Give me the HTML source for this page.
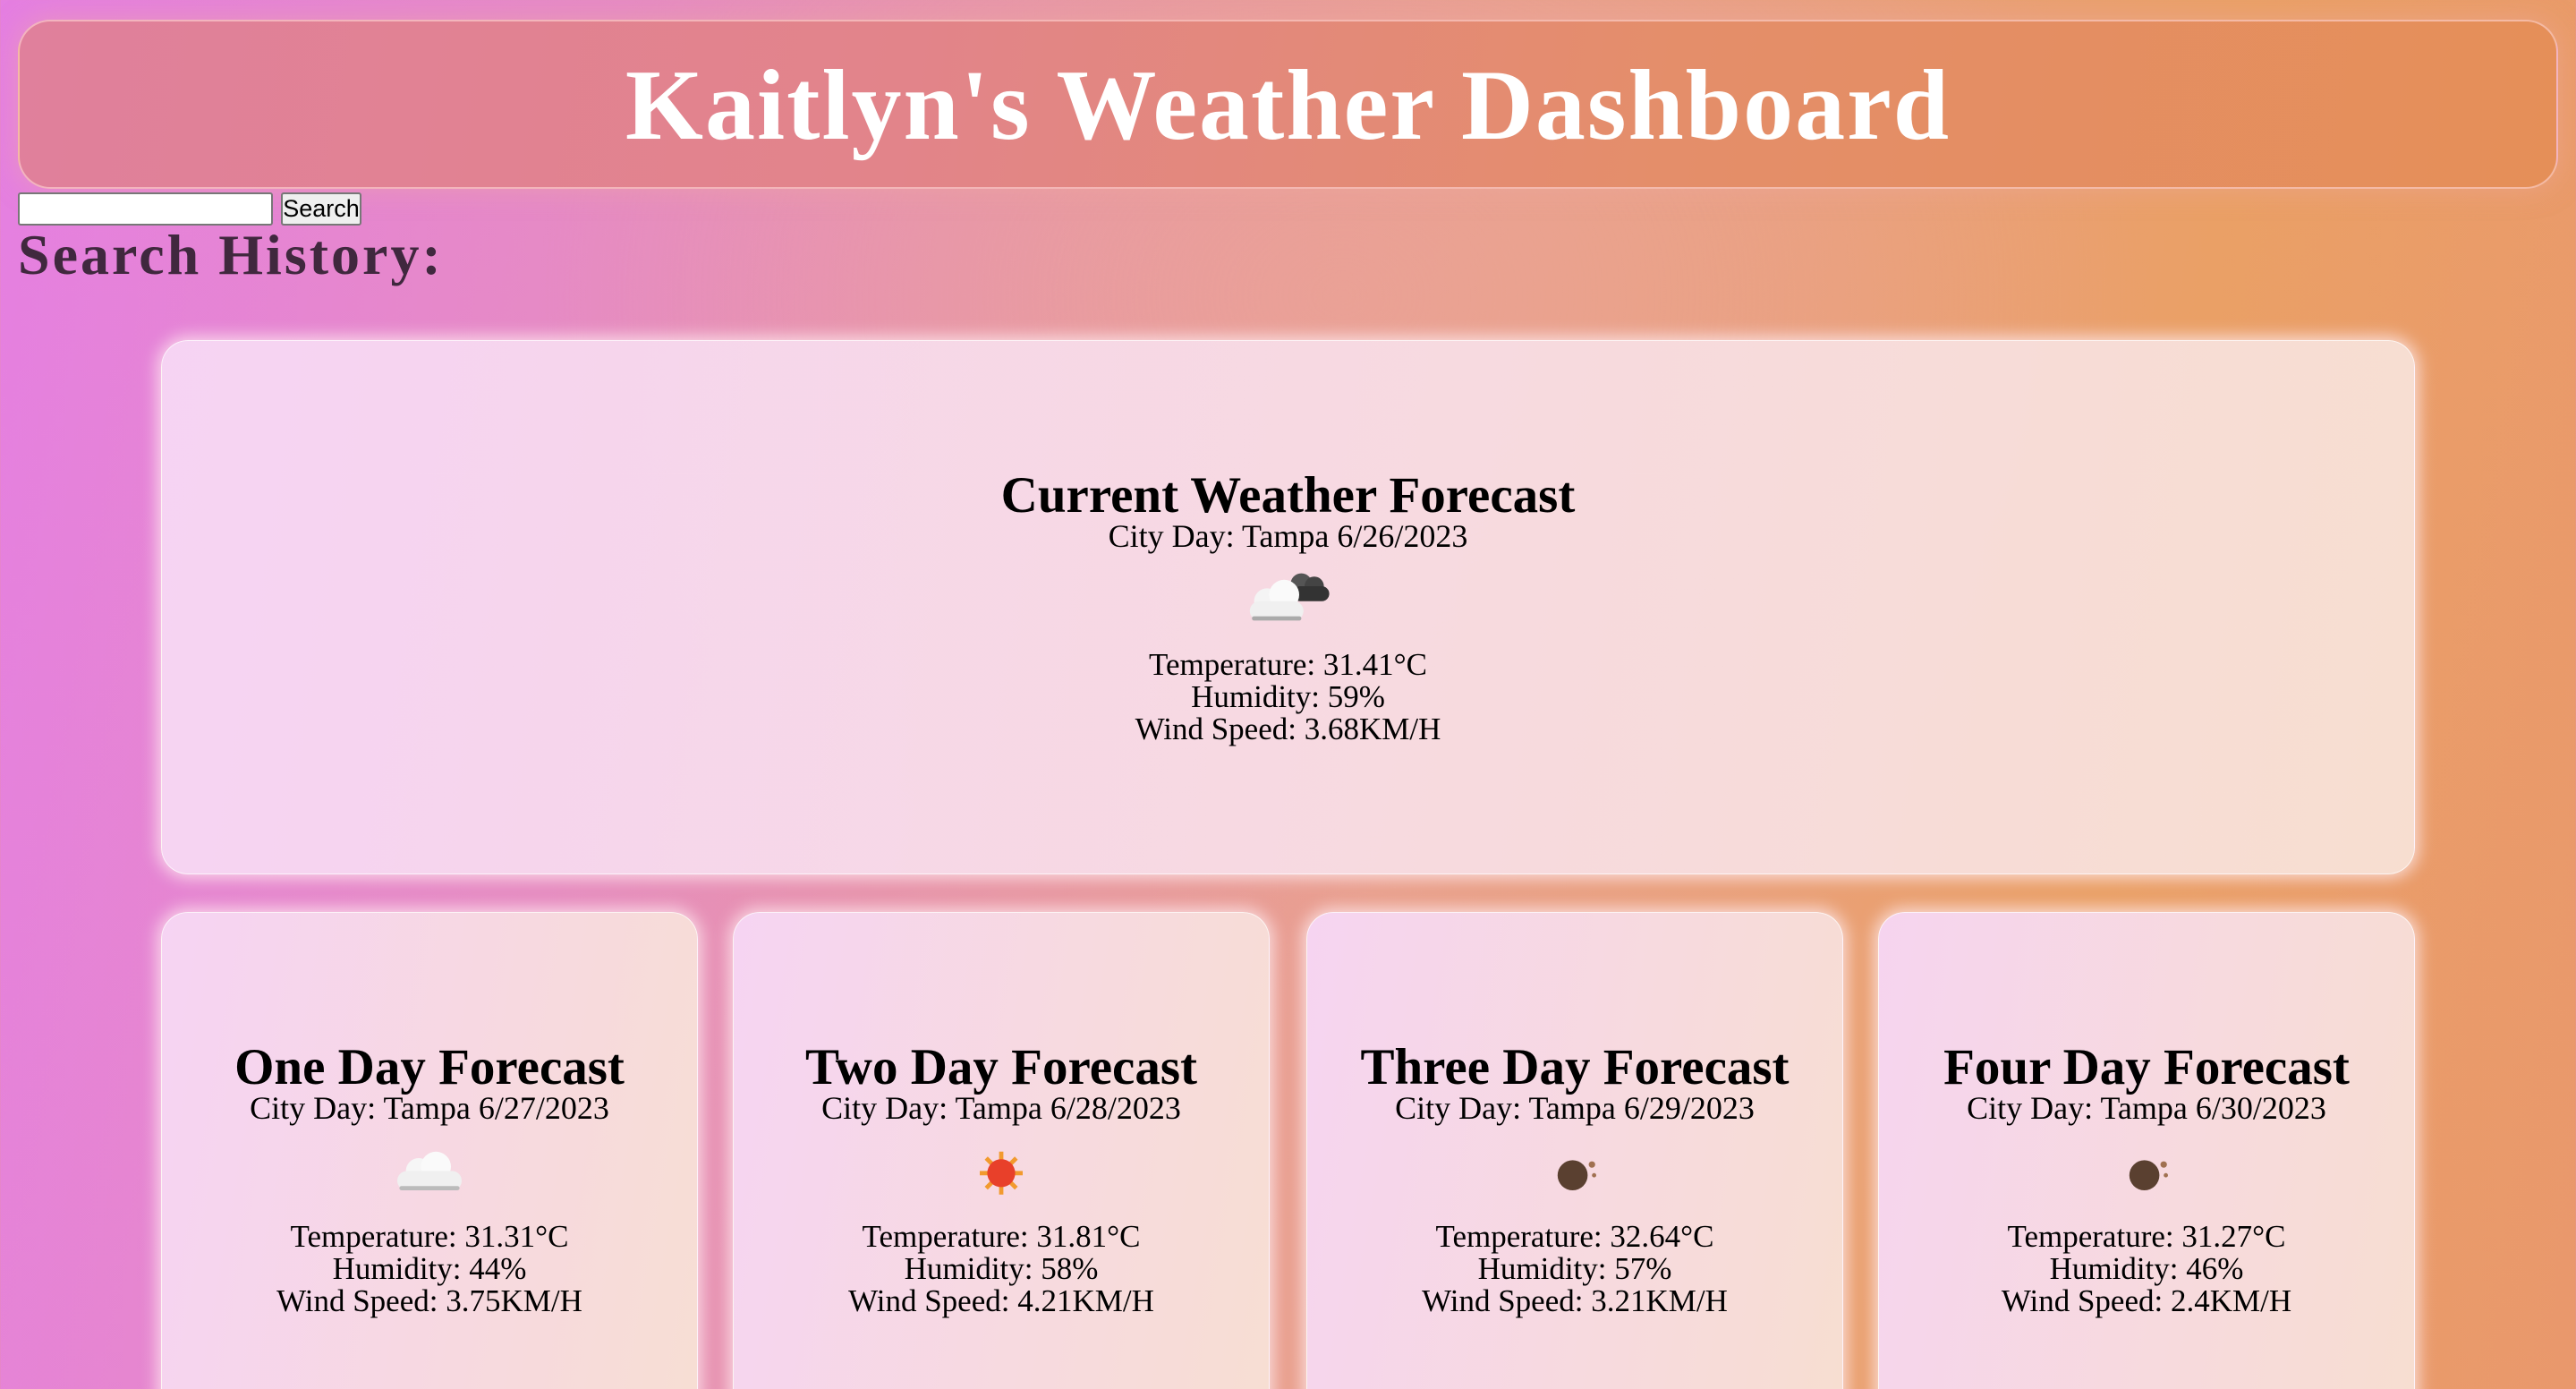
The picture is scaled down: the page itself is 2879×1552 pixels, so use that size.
<!DOCTYPE html>
<html><head><meta charset="utf-8"><style>
*{margin:0;padding:0;box-sizing:border-box}
html,body{width:2879px;height:1552px;overflow:hidden}
body{font-family:"Liberation Serif",serif;background:
radial-gradient(ellipse 900px 700px at 1500px 330px,rgba(235,165,150,.55),rgba(235,165,150,0)),
linear-gradient(100deg,#e57fe2 0%,#e68cc0 25%,#e9a08c 55%,#eaa066 80%,#e9986c 100%);position:relative}
.hdr{position:absolute;left:20px;top:22px;width:2839px;height:189px;border-radius:36px;border:2px solid rgba(255,215,215,.6);background:linear-gradient(100deg,#e0809c 0%,#e2848a 35%,#e48e6a 65%,#e58f58 100%);box-shadow:0 0 30px rgba(240,170,160,.5)}
.hdr h1{position:absolute;left:0;right:0;top:36px;text-align:center;color:#fff;font-size:112px;line-height:116px;font-weight:bold;letter-spacing:2px}
input{position:absolute;left:20px;top:215px;width:285px;height:37px;border:2px solid #777;border-radius:3px;background:#fff}
button{position:absolute;left:314px;top:215px;width:90px;height:37px;border:2px solid #777;border-radius:3px;background:#efefef;font-family:"Liberation Sans",sans-serif;font-size:27px;color:#000}
.sh{position:absolute;left:20px;top:250px;font-size:64px;font-weight:bold;color:#40283e;line-height:70px;letter-spacing:3px}
.card{position:absolute;border-radius:30px;background:linear-gradient(100deg,rgba(246,214,244,.97),rgba(247,224,212,.97));box-shadow:0 0 18px 4px rgba(255,235,240,.8);border:1px solid rgba(255,255,255,.7)}
.card div{position:absolute;left:0;right:0;text-align:center;color:#000}
.t{font-size:57px;font-weight:bold;line-height:60px;top:143px}
.c{font-size:36px;line-height:40px;top:198px}
.ic{top:238px;height:96px}
.ic svg{width:120px;height:96px}
.l1,.l2,.l3{font-size:35px;line-height:36px}
.l1{top:344px}.l2{top:380px}.l3{top:416px}
</style></head><body>
<div class="hdr"><h1>Kaitlyn's Weather Dashboard</h1></div>
<input type="text"><button>Search</button>
<div class="sh">Search History:</div>

<div class="card" style="left:180px;top:380px;width:2519px;height:597px">
<div class="t">Current Weather Forecast</div>
<div class="c">City Day: Tampa 6/26/2023</div>
<div class="ic"><svg viewBox="0 0 100 80"><circle cx="62" cy="28" r="10" fill="#555"/><circle cx="74" cy="30" r="9" fill="#444"/><rect x="54" y="30" width="34" height="14" rx="7" fill="#333"/><circle cx="30" cy="44" r="12" fill="#f4f4f4"/><circle cx="46" cy="38" r="14" fill="#fafafa"/><rect x="14" y="44" width="50" height="18" rx="9" fill="#f0f0f0"/><rect x="16" y="58" width="46" height="4" rx="2" fill="#aaa"/></svg></div>
<div class="l1">Temperature: 31.41°C</div><div class="l2">Humidity: 59%</div><div class="l3">Wind Speed: 3.68KM/H</div>
</div>

<div class="card" style="left:180px;top:1019px;width:600px;height:600px">
<div class="t">One Day Forecast</div>
<div class="c">City Day: Tampa 6/27/2023</div>
<div class="ic"><svg viewBox="0 0 100 80"><circle cx="40" cy="42" r="12" fill="#f6f6f6"/><circle cx="56" cy="38" r="14" fill="#fafafa"/><rect x="20" y="42" width="60" height="18" rx="9" fill="#f0f0f0"/><rect x="22" y="56" width="56" height="4" rx="2" fill="#bbb"/></svg></div>
<div class="l1">Temperature: 31.31°C</div><div class="l2">Humidity: 44%</div><div class="l3">Wind Speed: 3.75KM/H</div>
</div>

<div class="card" style="left:819px;top:1019px;width:600px;height:600px">
<div class="t">Two Day Forecast</div>
<div class="c">City Day: Tampa 6/28/2023</div>
<div class="ic"><svg viewBox="0 0 100 80"><g stroke="#f29a2e" stroke-width="4"><line x1="50" y1="24" x2="50" y2="64"/><line x1="30" y1="44" x2="70" y2="44"/><line x1="36" y1="30" x2="64" y2="58"/><line x1="64" y1="30" x2="36" y2="58"/></g><circle cx="50" cy="44" r="13" fill="#e8402a"/></svg></div>
<div class="l1">Temperature: 31.81°C</div><div class="l2">Humidity: 58%</div><div class="l3">Wind Speed: 4.21KM/H</div>
</div>

<div class="card" style="left:1460px;top:1019px;width:600px;height:600px">
<div class="t">Three Day Forecast</div>
<div class="c">City Day: Tampa 6/29/2023</div>
<div class="ic"><svg viewBox="0 0 100 80"><circle cx="48" cy="46" r="14" fill="#5a4030"/><circle cx="66" cy="36" r="3" fill="#a07050"/><circle cx="68" cy="46" r="2" fill="#a07050"/></svg></div>
<div class="l1">Temperature: 32.64°C</div><div class="l2">Humidity: 57%</div><div class="l3">Wind Speed: 3.21KM/H</div>
</div>

<div class="card" style="left:2099px;top:1019px;width:600px;height:600px">
<div class="t">Four Day Forecast</div>
<div class="c">City Day: Tampa 6/30/2023</div>
<div class="ic"><svg viewBox="0 0 100 80"><circle cx="48" cy="46" r="14" fill="#5a4030"/><circle cx="66" cy="36" r="3" fill="#a07050"/><circle cx="68" cy="46" r="2" fill="#a07050"/></svg></div>
<div class="l1">Temperature: 31.27°C</div><div class="l2">Humidity: 46%</div><div class="l3">Wind Speed: 2.4KM/H</div>
</div>
</body></html>
